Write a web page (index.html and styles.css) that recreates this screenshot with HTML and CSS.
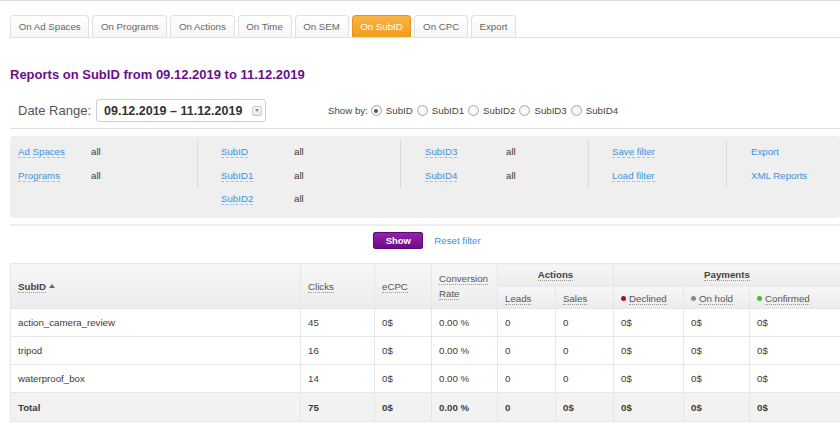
FILE: index.html
```html
<!DOCTYPE html>
<html>
<head>
<meta charset="utf-8">
<link rel="stylesheet" href="styles.css">
</head>
<body>
<div class="page">
  <ul class="tabs">
    <li class="tab">On Ad Spaces</li>
    <li class="tab">On Programs</li>
    <li class="tab">On Actions</li>
    <li class="tab">On Time</li>
    <li class="tab">On SEM</li>
    <li class="tab active">On SubID</li>
    <li class="tab">On CPC</li>
    <li class="tab">Export</li>
  </ul>

  <h1 class="title">Reports on SubID from 09.12.2019 to 11.12.2019</h1>

  <div class="toolbar">
    <span class="dr-label">Date Range:</span>
    <div class="dr-input">
      <span class="dr-text">09.12.2019 &ndash; 11.12.2019</span>
      <span class="dr-btn"><span class="dr-caret"></span></span>
    </div>
    <div class="showby">
      <span class="sb-label">Show by:</span>
      <span class="radio checked"></span><span class="sb-opt">SubID</span>
      <span class="radio"></span><span class="sb-opt">SubID1</span>
      <span class="radio"></span><span class="sb-opt">SubID2</span>
      <span class="radio"></span><span class="sb-opt">SubID3</span>
      <span class="radio"></span><span class="sb-opt">SubID4</span>
    </div>
  </div>

  <div class="rule"></div>

  <div class="filters">
    <div class="fcol c1">
      <div class="frow"><span class="flink w73"><a>Ad Spaces</a></span><span class="fval">all</span></div>
      <div class="frow"><span class="flink w73"><a>Programs</a></span><span class="fval">all</span></div>
    </div>
    <div class="sep"></div>
    <div class="fcol c2">
      <div class="frow"><span class="flink w73"><a>SubID</a></span><span class="fval">all</span></div>
      <div class="frow"><span class="flink w73"><a>SubID1</a></span><span class="fval">all</span></div>
      <div class="frow"><span class="flink w73"><a>SubID2</a></span><span class="fval">all</span></div>
    </div>
    <div class="sep"></div>
    <div class="fcol c3">
      <div class="frow"><span class="flink w81"><a>SubID3</a></span><span class="fval">all</span></div>
      <div class="frow"><span class="flink w81"><a>SubID4</a></span><span class="fval">all</span></div>
    </div>
    <div class="sep"></div>
    <div class="fcol c4">
      <div class="frow"><span class="flink"><a>Save filter</a></span></div>
      <div class="frow"><span class="flink"><a>Load filter</a></span></div>
    </div>
    <div class="sep"></div>
    <div class="fcol c5">
      <div class="frow"><span class="plain">Export</span></div>
      <div class="frow"><span class="plain">XML Reports</span></div>
    </div>
  </div>

  <div class="rule2"></div>

  <div class="actions">
    <button class="btn-show">Show</button>
    <span class="reset">Reset filter</span>
  </div>

  <table class="report">
    <colgroup>
      <col style="width:290px"><col style="width:74px"><col style="width:57px"><col style="width:66px">
      <col style="width:58px"><col style="width:58px"><col style="width:70px"><col style="width:66px"><col style="width:91px">
    </colgroup>
    <thead>
      <tr class="h1">
        <th rowspan="2" class="left"><span class="hl bold">SubID</span> <span class="sort"></span></th>
        <th rowspan="2" class="left"><span class="hl">Clicks</span></th>
        <th rowspan="2" class="left"><span class="hl">eCPC</span></th>
        <th rowspan="2" class="left conv"><span class="hl">Conversion</span><br><span class="hl">Rate</span></th>
        <th colspan="2" class="group"><span class="hl bold">Actions</span></th>
        <th colspan="3" class="group"><span class="hl bold">Payments</span></th>
      </tr>
      <tr class="h2">
        <th class="left sub"><span class="hl">Leads</span></th>
        <th class="left sub"><span class="hl">Sales</span></th>
        <th class="left sub"><span class="dot red"></span><span class="hl">Declined</span></th>
        <th class="left sub"><span class="dot gray"></span><span class="hl">On hold</span></th>
        <th class="left sub"><span class="dot green"></span><span class="hl">Confirmed</span></th>
      </tr>
    </thead>
    <tbody>
      <tr><td>action_camera_review</td><td>45</td><td>0$</td><td>0.00 %</td><td>0</td><td>0</td><td>0$</td><td>0$</td><td>0$</td></tr>
      <tr><td>tripod</td><td>16</td><td>0$</td><td>0.00 %</td><td>0</td><td>0</td><td>0$</td><td>0$</td><td>0$</td></tr>
      <tr><td>waterproof_box</td><td>14</td><td>0$</td><td>0.00 %</td><td>0</td><td>0</td><td>0$</td><td>0$</td><td>0$</td></tr>
      <tr class="total"><td>Total</td><td>75</td><td>0$</td><td>0.00 %</td><td>0</td><td>0$</td><td>0$</td><td>0$</td><td>0$</td></tr>
    </tbody>
  </table>
</div>
</body>
</html>
```

FILE: styles.css
```css
html, body {
  margin: 0;
  padding: 0;
  background: #fff;
}
body {
  font-family: "Liberation Sans", Arial, sans-serif;
  font-size: 9.7px;
  color: #3a3a3a;
  border-top: 1px solid #dcdcdc;
}
.page {
  padding-left: 10px;
}
.tabs {
  list-style: none;
  margin: 14px 0 0 0;
  padding: 0;
  display: flex;
  gap: 3px;
  border-bottom: 1px solid #e2e2e2;
}
.tab {
  height: 21px;
  line-height: 21px;
  padding: 0 7.7px;
  color: #666;
  font-size: 9.7px;
  border: 1px solid #e0e0e0;
  border-bottom: none;
  border-radius: 4px 4px 0 0;
  background: linear-gradient(#ffffff, #f6f6f6);
}
.tab.active {
  background: linear-gradient(#f9b446, #f19c1b);
  border-color: #e6951c;
  color: #fff;
}
.title {
  margin: 29px 0 0 0;
  font-size: 13px;
  line-height: 16px;
  font-weight: bold;
  color: #6a0f8c;
}
.toolbar {
  margin-top: 16px;
  display: flex;
  align-items: center;
  height: 23px;
}
.dr-label {
  padding-left: 8px;
  font-size: 13px;
  color: #555;
}
.dr-input {
  margin-left: 5px;
  width: 168px;
  height: 21px;
  border: 1px solid #cfcfcf;
  border-radius: 3px;
  display: flex;
  align-items: center;
  background: #fff;
}
.dr-text {
  padding-left: 7px;
  font-size: 12.5px;
  font-weight: bold;
  color: #333;
}
.dr-btn {
  margin-left: 10px;
  width: 8px;
  height: 8px;
  border: 1px solid #c8c8c8;
  border-radius: 2px;
  background: linear-gradient(#fafafa, #e6e6e6);
  display: flex;
  align-items: center;
  justify-content: center;
}
.dr-caret {
  width: 0;
  height: 0;
  border-left: 2.5px solid transparent;
  border-right: 2.5px solid transparent;
  border-top: 3px solid #888;
}
.showby {
  margin-left: 62px;
  display: flex;
  align-items: center;
  font-size: 9.7px;
  color: #444;
}
.sb-label {
  margin-right: 3px;
}
.radio {
  width: 9px;
  height: 9px;
  border: 1px solid #aaa;
  border-radius: 50%;
  background: radial-gradient(circle, #fdfdfd 30%, #e4e4e4 100%);
  margin-right: 4px;
  position: relative;
  box-sizing: content-box;
}
.radio.checked::after {
  content: "";
  position: absolute;
  left: 2.5px;
  top: 2.5px;
  width: 4px;
  height: 4px;
  border-radius: 50%;
  background: #555;
}
.sb-opt {
  margin-right: 4px;
}
.rule {
  margin-top: 6px;
  height: 1px;
  background: #dedede;
}
.filters {
  margin-top: 7px;
  height: 82px;
  box-sizing: border-box;
  background: #efefef;
  border-radius: 4px;
  display: flex;
  align-items: flex-start;
  padding-top: 8px;
}
.fcol {
  display: flex;
  flex-direction: column;
  gap: 7.5px;
}
.frow {
  display: flex;
  height: 16px;
  line-height: 16px;
}
.c1 { width: 179px; padding-left: 8px; }
.c2 { width: 179px; padding-left: 23px; }
.c3 { width: 163px; padding-left: 24px; }
.c4 { width: 114px; padding-left: 23px; }
.c5 { padding-left: 24px; }
.w73 { width: 73px; }
.w81 { width: 81px; }
.flink a, .plain, .reset {
  color: #3d8fe0;
}
.flink a {
  border-bottom: 1px dashed #9cc4ee;
}
.fval {
  color: #3a3a3a;
}
.sep {
  width: 0;
  height: 47px;
  margin-top: -4px;
  border-left: 1px dotted #c4c4c4;
}
.rule2 {
  margin-top: 6px;
  height: 2px;
  background: #efefef;
}
.actions {
  margin-top: 6px;
  padding-left: 4px;
  display: flex;
  justify-content: center;
  align-items: center;
  gap: 11px;
}
.btn-show {
  width: 50px;
  height: 17px;
  padding: 0;
  border: 1px solid #5e0a73;
  border-radius: 2px;
  background: linear-gradient(#9323ad, #6d0c85);
  color: #fff;
  font-family: "Liberation Sans", Arial, sans-serif;
  font-size: 9.5px;
  font-weight: bold;
}
.report {
  margin-top: 14px;
  width: 830px;
  border-collapse: collapse;
  table-layout: fixed;
  font-size: 9.7px;
}
.report th, .report td {
  border: 1px solid #e6e6e6;
  padding: 0 0 0 7px;
  text-align: left;
  font-weight: normal;
}
.report thead th {
  background: linear-gradient(#f7f7f7, #ececec);
  color: #555;
}
.report tr.h1 { height: 22px; }
.report tr.h2 { height: 23px; }
.report th.group {
  text-align: center;
  padding: 0;
}
.report th.conv {
  line-height: 15px;
}
.report th.sub {
  vertical-align: middle;
  padding-top: 2px;
}
.hl {
  border-bottom: 1px dotted #999;
}
.hl.bold {
  font-weight: bold;
  color: #444;
}
.sort {
  display: inline-block;
  width: 0;
  height: 0;
  border-left: 3px solid transparent;
  border-right: 3px solid transparent;
  border-bottom: 4px solid #666;
  vertical-align: 2px;
}
.dot {
  display: inline-block;
  width: 5px;
  height: 5px;
  border-radius: 50%;
  margin-right: 3px;
  vertical-align: 1px;
}
.dot.red { background: #a5141b; }
.dot.gray { background: #8a8a8a; }
.dot.green { background: #3fbf28; }
.report tbody td {
  height: 27px;
  color: #3a3a3a;
}
.report tbody tr.total td {
  height: 28px;
  background: #f2f2f2;
  font-weight: bold;
  color: #3a3a3a;
}
```
